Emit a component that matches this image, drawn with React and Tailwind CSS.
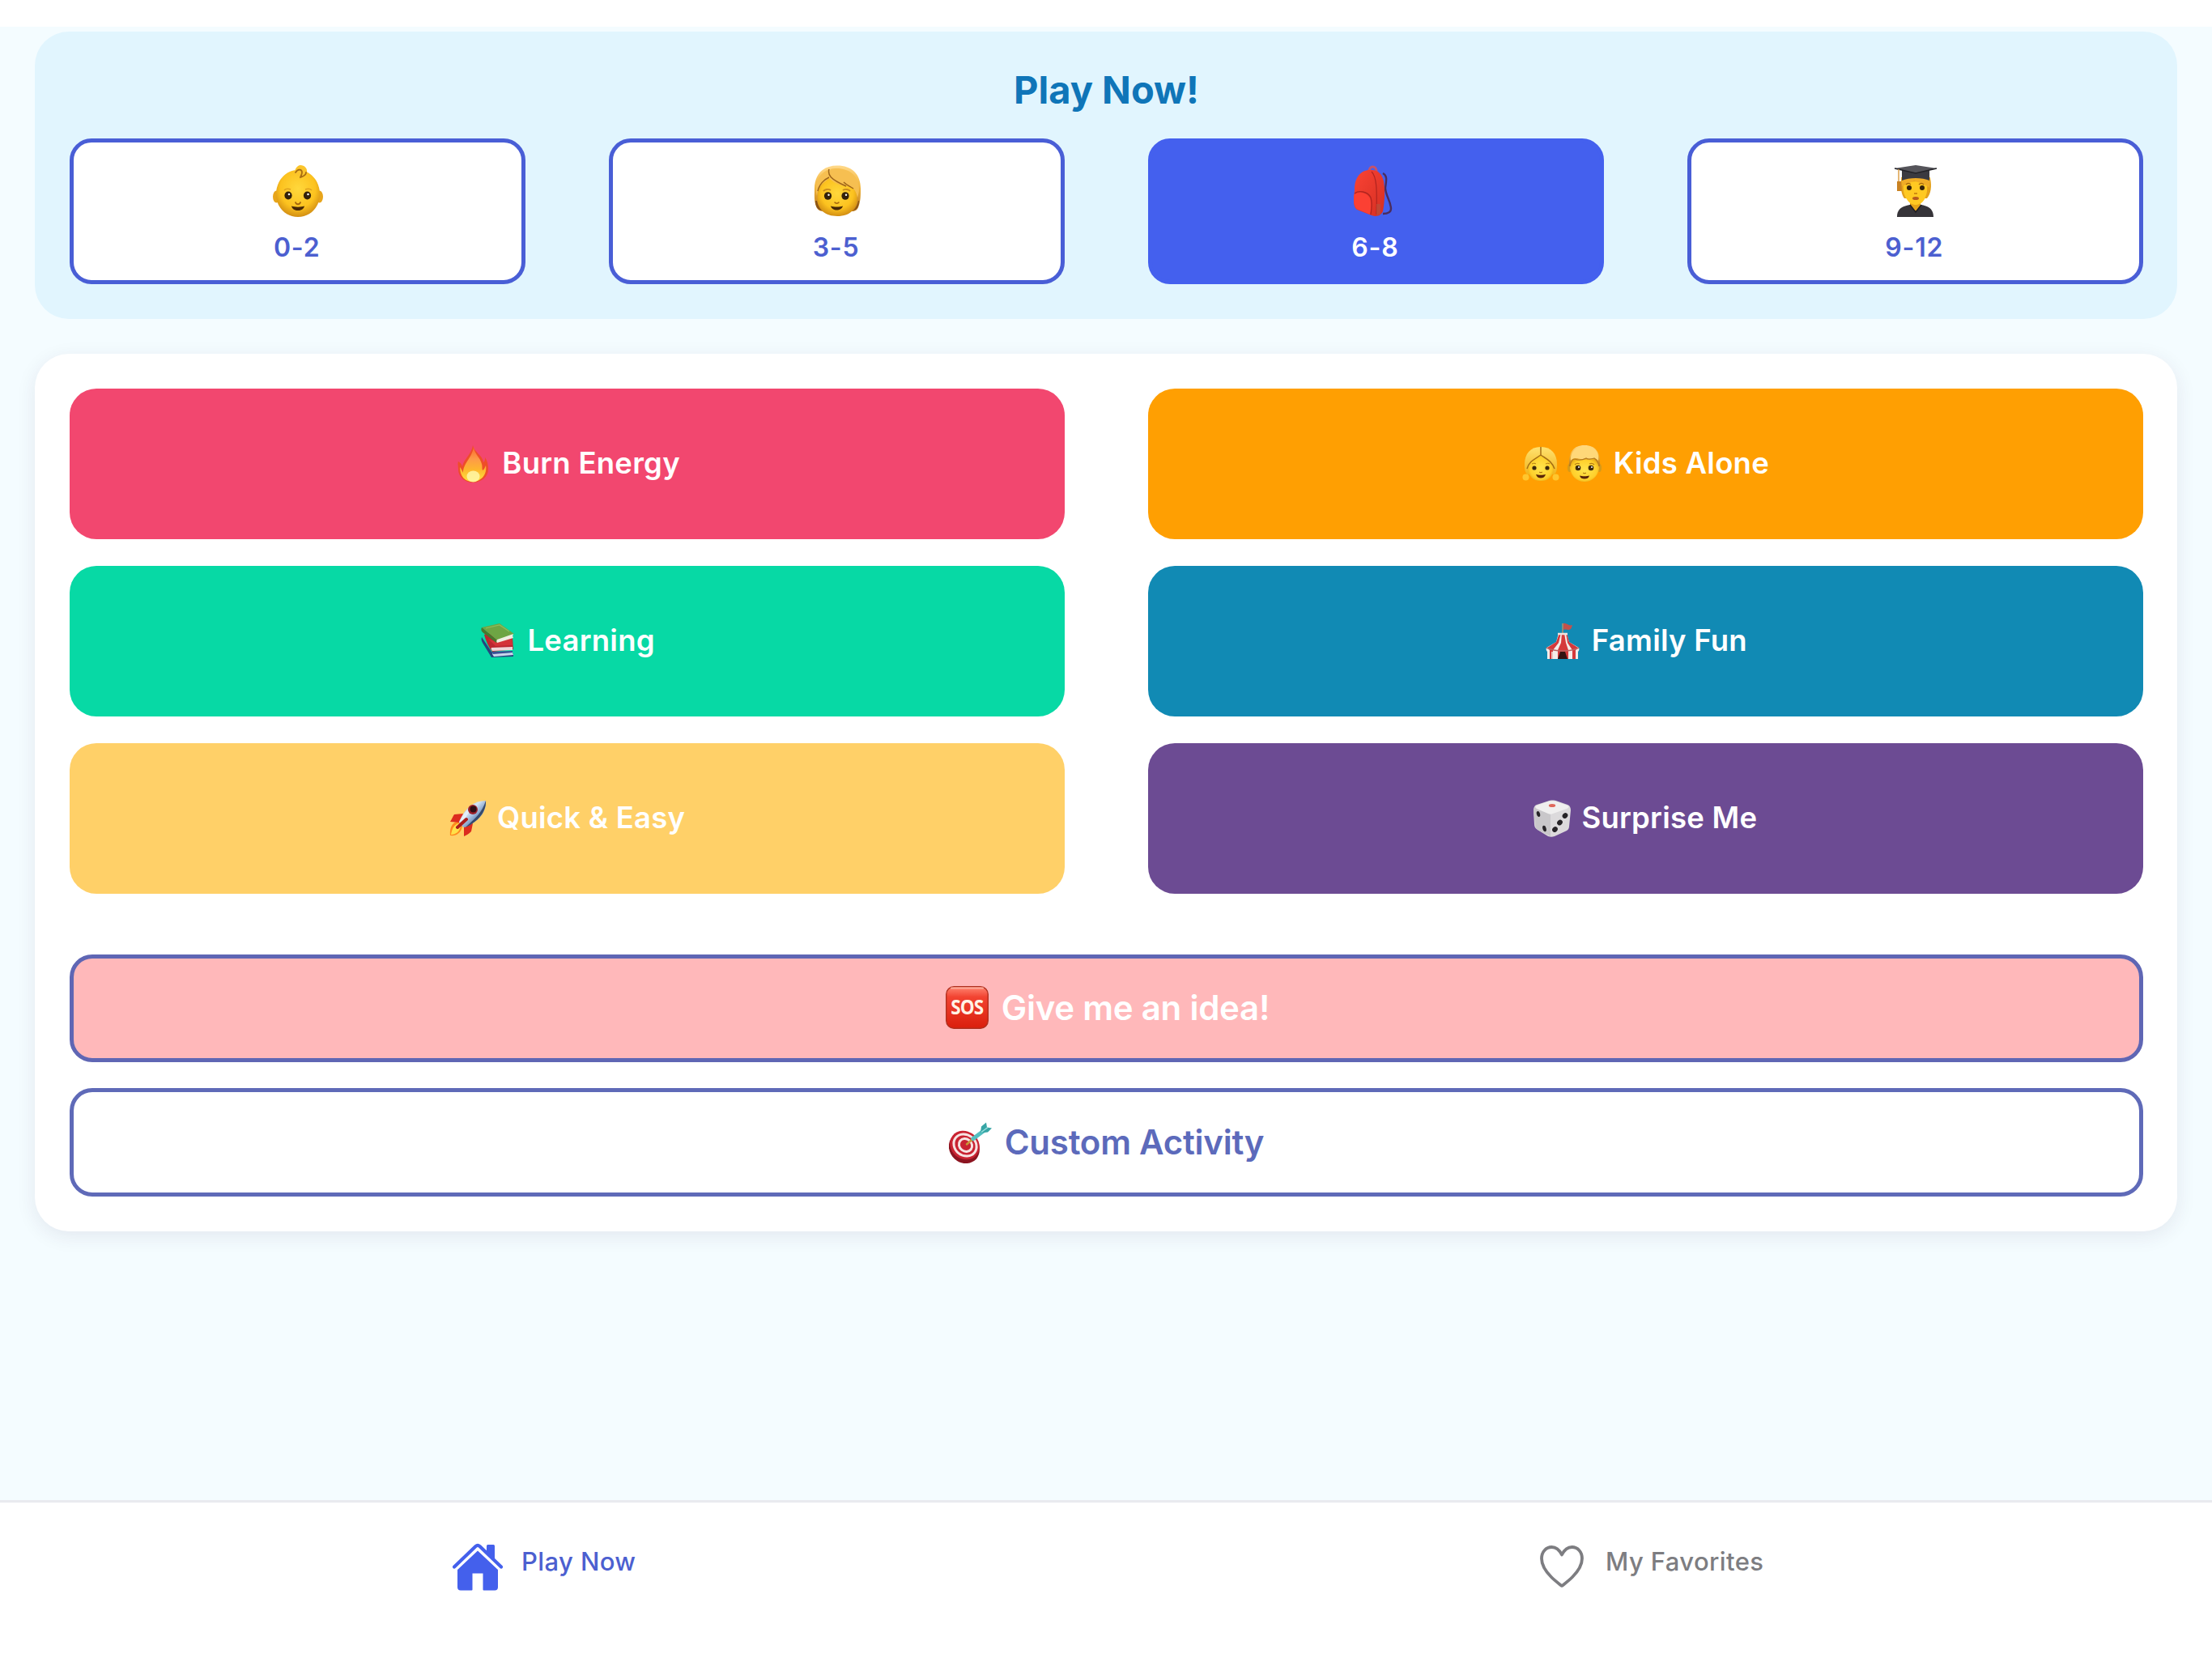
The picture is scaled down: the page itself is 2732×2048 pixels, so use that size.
import React from "react";

function Defs() {
  return (
    <svg width="0" height="0" className="absolute" aria-hidden="true">
      <defs>
        <radialGradient id="skin" cx="0.5" cy="0.4" r="0.62">
          <stop offset="0" stopColor="#ffd83c" />
          <stop offset="0.65" stopColor="#fcc21f" />
          <stop offset="1" stopColor="#cf8a12" />
        </radialGradient>
        <radialGradient id="skinLight" cx="0.5" cy="0.5" r="0.6">
          <stop offset="0" stopColor="#ffe44d" />
          <stop offset="0.7" stopColor="#ffd02b" />
          <stop offset="1" stopColor="#e0a012" />
        </radialGradient>
        <linearGradient id="hair" x1="0" y1="0" x2="0" y2="1">
          <stop offset="0" stopColor="#ffd98a" />
          <stop offset="0.45" stopColor="#f3b73e" />
          <stop offset="1" stopColor="#b9771a" />
        </linearGradient>
        <linearGradient id="hairLight" x1="0" y1="0" x2="0" y2="1">
          <stop offset="0" stopColor="#ffe271" />
          <stop offset="1" stopColor="#f2b51c" />
        </linearGradient>
        <linearGradient id="red" x1="0" y1="0" x2="1" y2="1">
          <stop offset="0" stopColor="#fb4335" />
          <stop offset="1" stopColor="#d42f22" />
        </linearGradient>
        <linearGradient id="flame" x1="0" y1="0" x2="0" y2="1">
          <stop offset="0" stopColor="#fb6a2e" />
          <stop offset="0.35" stopColor="#fd9a48" />
          <stop offset="0.65" stopColor="#fdb62e" />
          <stop offset="1" stopColor="#ffe23e" />
        </linearGradient>
        <linearGradient id="sos" x1="0" y1="0" x2="0" y2="1">
          <stop offset="0" stopColor="#ff8672" />
          <stop offset="0.25" stopColor="#f24331" />
          <stop offset="1" stopColor="#da1e0c" />
        </linearGradient>
        <linearGradient id="rocket" x1="0" y1="0" x2="1" y2="1">
          <stop offset="0" stopColor="#7f9cc4" />
          <stop offset="0.4" stopColor="#d5e4f5" />
          <stop offset="0.7" stopColor="#5d82b5" />
          <stop offset="1" stopColor="#2f4468" />
        </linearGradient>
      </defs>
    </svg>
  );
}

function Baby() {
  return (
    <svg viewBox="0 0 64 64" className="size-16">
      <ellipse cx="5.500" cy="39" rx="4.500" ry="7.500" fill="#e8a51b" />
      <ellipse cx="58.500" cy="39" rx="4.500" ry="7.500" fill="#e8a51b" />
      <path d="M32 6C47 6 59 19 59 36c0 16-12 28-27 28S5 52 5 36C5 19 17 6 32 6z" fill="url(#skin)" />
      <path d="M27 11c1-6 4-11 8-11 5 0 9 4 8 9-1 3-4 5-7 6" fill="#fbc52c" />
      <path d="M29 9c3-5 8-4 8 0 0 3-2 5-2 6 3-1 7-2 7-6" fill="none" stroke="#a86d12" strokeWidth="1.800" strokeLinecap="round" />
      <path d="M15 31c2-2 5-2 8-1M41 30c3-1 6-1 8 1" fill="none" stroke="#dfa01e" strokeWidth="1.500" />
      <ellipse cx="20" cy="37.500" rx="4.600" ry="5" fill="#33210a" />
      <ellipse cx="43.500" cy="37.500" rx="4.600" ry="5" fill="#33210a" />
      <circle cx="21" cy="36" r="1.300" fill="#fff" />
      <circle cx="44.500" cy="36" r="1.300" fill="#fff" />
      <path d="M29 46c1 3 5 3 6 0" fill="none" stroke="#a5660c" strokeWidth="1.800" strokeLinecap="round" />
      <path d="M24 50.500c4 1.500 12 1.500 16 0-1 4-4 5.500-8 5.500s-7-1.500-8-5.500z" fill="#472806" />
    </svg>
  );
}

function Child() {
  return (
    <svg viewBox="0 0 64 64" className="size-16">
      <path d="M32 .5C14 .5 4 12 4 29c0 8-1 17 3 24 2 3 5 4 8 4h35c4 0 7-2 8-5 3-7 3-15 3-23C61 11 50 .5 32 .5z" fill="url(#hair)" />
      <path d="M22 16c-6 6-13 9-14 18-1 10-1 16 4 21 5 6 12 8 20 8s15-2 20-8c5-5 5-11 4-20-1-4-2-6-5-8-11-1-20-2-29-11z" fill="url(#skin)" />
      <path d="M22 15C12 20 8 28 7 38 3 24 8 11 22 5c-1 4-1 7 0 10zM22 15c6 5 16 8 21 11l-3-5c4 4 9 5 12 8 3 3 4 7 5 11 4-12 2-24-8-31C42 4 30 3 24 5c-2 3-3 7-2 10z" fill="#f6bf51" />
      <path d="M22 5c-2 7 1 12 21 21M22 15C16 18 10 23 8 32M40 21c4 4 8 5 12 8" fill="none" stroke="#9d6419" strokeWidth="1.500" />
      <path d="M5 44c0 6 2 11 8 12-3-3-5-7-6-12zM59 44c0 6-2 11-7 12 3-3 5-7 6-12z" fill="#8a5416" />
      <path d="M15 32c2-2 6-3 9-1M39 31c3-2 7-1 9 1" fill="none" stroke="#c88a1d" strokeWidth="1.800" />
      <ellipse cx="20.500" cy="38" rx="4.600" ry="4.800" fill="#33210a" />
      <ellipse cx="42" cy="38" rx="4.600" ry="4.800" fill="#33210a" />
      <circle cx="21.500" cy="36.700" r="1.200" fill="#fff" />
      <circle cx="43" cy="36.700" r="1.200" fill="#fff" />
      <path d="M29 46c1 1.500 4 1.500 5 0" fill="none" stroke="#a5660c" strokeWidth="1.500" strokeLinecap="round" />
      <path d="M24 50.500c4 1.300 11 1.300 15 0-1 3.500-4 5-7.500 5s-6.500-1.500-7.500-5z" fill="#472806" />
    </svg>
  );
}

function Backpack() {
  return (
    <svg viewBox="0 0 64 64" className="size-16">
      <path d="M41 10c6 3 4 10 3 18 0 9 7 17 7 26 0 5-5 6-10 6" fill="none" stroke="#4a2c5e" strokeWidth="2.400" />
      <path d="M24 8c0-8 9-8 9 0" fill="none" stroke="#c4526c" strokeWidth="3" />
      <path d="M6 30C6 16 13 6 25 6c10-1 15 5 17 14 2 13 1 26-1 37-3 6-8 7-14 5L9 55c-4-3-4-8-4-13z" fill="url(#red)" />
      <path d="M27 8c6 6 7 20 6 53" fill="none" stroke="#b02420" strokeWidth="1.200" />
      <path d="M33 48h5v13l-5 1z" fill="#b8503a" opacity="0.700" />
      <path d="M5 37c4-5 16-4 20 4 2 6 1 14 0 20L9 54c-4-3-4-11-4-17z" fill="#fb4033" />
      <path d="M6 35c5-4 16-3 20 5 2 6 1 15 0 21" fill="none" stroke="#b02420" strokeWidth="1.300" />
    </svg>
  );
}

function Student() {
  return (
    <svg viewBox="0 0 64 64" className="size-16">
      <path d="M15 17C14 27 15 36 19 41h28c5-6 6-15 4-25z" fill="#e3a01b" />
      <path d="M26 42h13v9l-6 8-7-8z" fill="#e5a317" />
      <path d="M18 23c2-3 27-4 29 0 1 9-1 15-3 19-3 5-7 7-11 7s-8-2-11-7c-3-4-5-10-4-19z" fill="#ffc922" />
      <path d="M16 26c6-2 12-5 15-7 6 3 13 4 19 9l1-13H15z" fill="#f0ac27" />
      <path d="M10 64c0-10 6-13 16-15l7 8 7-8c9 2 15 5 15 15z" fill="#363439" />
      <path d="M26 49l7 9 7-9" fill="none" stroke="#1f1d22" strokeWidth="1.500" />
      <path d="M16 5h34v14c-9-4-25-4-34 0z" fill="#3b3a40" />
      <path d="M7 4L33 0l26 4-26 6z" fill="#55545a" />
      <path d="M7 4l26 6 26-6" fill="none" stroke="#232227" strokeWidth="1.300" />
      <path d="M12 5v16" stroke="#dca14a" strokeWidth="1.500" />
      <path d="M10 20h5l1 12h-6z" fill="#c98222" />
      <path d="M21 24c2-2 4-2 6 0M37 24c2-2 4-2 6 0" fill="none" stroke="#a8690d" strokeWidth="1.300" />
      <circle cx="25" cy="28" r="3" fill="#33210a" />
      <circle cx="41" cy="28" r="3" fill="#33210a" />
      <path d="M31 35h4" stroke="#c0790c" strokeWidth="1.500" />
      <ellipse cx="33" cy="41" rx="4" ry="2" fill="#b65a1d" />
    </svg>
  );
}

function Flame() {
  return (
    <svg viewBox="0 0 46 46" className="size-[46px]">
      <path d="M23 0c1 8 12 12 13 21 2-1 2-4 2-6 3 4 4 9 4 15 0 9-9 16-19 16S5 39 5 30c0-5-1-7 0-10 2 1 4 3 5 6 2-9 12-16 13-26z" fill="#ee4e28" />
      <path d="M24 2c1 9 8 13 10 21 1 3 0 6 1 8 2-1 3-4 4-6 2 11-6 20-16 20S7 38 7 27c2 2 3 5 4 7C11 22 22 16 24 2z" fill="url(#flame)" />
      <ellipse cx="23.500" cy="38.500" rx="8" ry="7" fill="#fff7a8" opacity="0.850" />
    </svg>
  );
}

function Girl() {
  return (
    <svg viewBox="0 0 46 46" className="size-[46px]">
      <circle cx="4.500" cy="39.500" r="4" fill="#ffc62e" />
      <circle cx="41.500" cy="39.500" r="4" fill="#ffc62e" />
      <path d="M23 2C10 2 3 11 3 23c0 6 0 9 3 13h34c3-4 3-7 3-13C43 11 36 2 23 2z" fill="url(#hairLight)" />
      <path d="M23 12C17 17 9 19 7 26c0 12 6 18 16 18s16-6 16-18c-2-7-10-9-16-14z" fill="url(#skinLight)" />
      <path d="M23 2v10C16 17 9 19 6 29M23 12c7 5 13 7 17 17" fill="none" stroke="#a66f15" strokeWidth="1.500" />
      <path d="M12 23c2-1 4-1 5 0M29 23c2-1 4-1 5 0" fill="none" stroke="#b57b12" />
      <circle cx="15" cy="28" r="2.600" fill="#3c280c" />
      <circle cx="31" cy="28" r="2.600" fill="#3c280c" />
      <path d="M21 33c1 1 3 1 4 0" fill="none" stroke="#a5660c" />
      <path d="M17 36c3 1 9 1 12 0-1 3-3 4.500-6 4.500S18 39 17 36z" fill="#5b2408" />
    </svg>
  );
}

function Boy() {
  return (
    <svg viewBox="0 0 46 46" className="size-[46px]">
      <ellipse cx="4.500" cy="28" rx="2.500" ry="5" fill="#d69a18" />
      <ellipse cx="41.500" cy="28" rx="2.500" ry="5" fill="#d69a18" />
      <path d="M23 0C9 0 3 9 4 26h38C43 9 37 0 23 0z" fill="url(#hair)" />
      <path d="M9 16c8 2 20 2 28 0 3 4 4 8 4 13-2 10-9 16-18 16S7 39 5 29c0-5 1-9 4-13z" fill="url(#skinLight)" />
      <path d="M6 19C5 7 14 1 24 1s18 6 16 18c-3-3-4-3-6-3-3 0-6 2-9 0-4 2-8 1-11 0-3 0-6 0-8 3z" fill="#ffd879" />
      <path d="M5 26c1-6 3-9 6-9 5 2 10 1 14-1 3 2 7 1 10 0 3 2 5 5 6 10" fill="none" stroke="#b57a20" strokeWidth="1.200" />
      <path d="M11 24c2-2 4-2 6-1M29 23c2-1 4-1 6 1" fill="none" stroke="#b57b12" strokeWidth="1.200" />
      <circle cx="15" cy="28" r="3.300" fill="#3c280c" />
      <circle cx="31" cy="28" r="3.300" fill="#3c280c" />
      <circle cx="16" cy="27" r="1" fill="#fff" />
      <circle cx="32" cy="27" r="1" fill="#fff" />
      <path d="M21 34c1 1 3 1 4 0" fill="none" stroke="#a5660c" />
      <path d="M17 37.500c3 1 9 1 12 0-1 3-3 4-6 4s-5-1-6-4z" fill="#5b2408" />
    </svg>
  );
}

function Books() {
  return (
    <svg viewBox="0 0 46 46" className="size-[46px]">
      <path d="M3 18c-1 3 0 5 1 7l11 18 27-1v-4l-25 1z" fill="#26457f" />
      <path d="M16 38l25-1 1 3-24 2c-1-1-2-3-2-4z" fill="#c9d6ea" />
      <path d="M15 36l26-1v2l-24 2z" fill="#3b4f94" />
      <path d="M6 15l4-2 31 6 1 14-26 3C11 30 8 22 6 15z" fill="#bb2630" />
      <path d="M11 20l9 9 21-1-1-8-19 4z" fill="#d43338" />
      <path d="M15 31l26-1v4l-25 1c-1-1-2-3-1-4z" fill="#efd5d6" />
      <path d="M3 6L25 1l18 13-21 8z" fill="#6ea544" />
      <path d="M3 6c-1 2-1 4 1 6l17 13 1-3z" fill="#47782d" />
      <path d="M22 21l20-7c-1 2-1 3 0 5l-20 6c-1-1-1-3 0-4z" fill="#f0efe2" />
      <path d="M8 7l17-4 12 8" fill="none" stroke="#8dbd5e" strokeWidth="1.200" />
    </svg>
  );
}

function Tent() {
  return (
    <svg viewBox="0 0 46 46" className="size-[46px]">
      <path d="M23 1v15" stroke="#9a8f77" strokeWidth="1.800" />
      <path d="M24 1c4-1 6 4 11 2-1 3-1 5-4 6-3 0-4-1-7 0z" fill="#c4514b" />
      <path d="M18 13h10l3 11 12 7c1 2 0 4-1 5v9H4v-9c-1-1-2-3-1-5l12-7z" fill="#f4ece9" />
      <path d="M19 13h2l-3 12-7 9v11H7V34l-3-3 11-7zM22 13h3l2 12 3 9v11H17V34l4-9zM27 13h1l3 11 11 7-3 3v11h-4V34l-6-9z" fill="#d5393b" />
      <path d="M3 31c6 3 10 4 20 4s15-1 20-4" fill="none" stroke="#bd6462" strokeWidth="1.500" />
      <path d="M17 45l3-9h6l3 9z" fill="#321312" />
      <path d="M17 14h12" stroke="#efe2df" strokeWidth="2.500" />
      <path d="M10 36v9M34 36v9" stroke="#f4ece9" strokeWidth="1.500" />
    </svg>
  );
}

function Rocket() {
  return (
    <svg viewBox="0 0 46 46" className="size-[46px]">
      <path d="M12 26C4 27 0 34 1 44c7 1 14-3 15-12z" fill="#ff8a1e" />
      <path d="M12 29C6 30 3 36 2 43c6 0 11-4 12-11z" fill="#ffe14a" />
      <path d="M17 17L6 18c-2 3-3 6-5 9l13 1zM29 29l-2 10c-3 3-5 4-9 6l0-13z" fill="#dc2c1f" />
      <path d="M45 1C31 1 20 9 12 27c0 2 4 7 7 7C35 27 46 16 45 1z" fill="url(#rocket)" />
      <path d="M13 26c4-8 8-14 14-18 2 2-5 9-11 22z" fill="#e9f2fb" opacity="0.800" />
      <path d="M45 1c1 12-8 25-25 33 8-8 20-16 25-33z" fill="#364a6c" />
      <circle cx="29" cy="12" r="6" fill="#9d2029" />
      <circle cx="29.500" cy="11.500" r="4" fill="#2d0e15" />
      <path d="M10 34l11-10" stroke="#ad1d1a" strokeWidth="4" strokeLinecap="round" />
    </svg>
  );
}

function Dice() {
  return (
    <svg viewBox="0 0 46 46" className="size-[46px]">
      <path d="M18 1.500c3-1.300 8-1.300 11 0L42 6c3 1 4 4 4 7l-2 20c0 3-2 5-5 6l-13 6c-3 1-5 1-8 0L5 37c-3-2-4-4-4-7L0 14c0-4 1-7 4-8z" fill="#dcdadc" />
      <path d="M2 9c5 3 12 6 19 8v28L7 38c-4-2-5-5-5-9L0 14c0-2 1-4 2-5z" fill="#c9c7ca" />
      <path d="M4 7l14-5c3-1 7-1 10 0l14 5c2 1 2 3-1 4l-17 6c-2 1-4 1-6 0L4 11c-2-1-2-3 0-4z" fill="#f0efef" />
      <ellipse cx="23" cy="7" rx="4.200" ry="2" fill="#df685c" />
      <ellipse cx="6" cy="17.500" rx="2.100" ry="3.600" fill="#262327" transform="rotate(-15 6 17.500)" />
      <ellipse cx="13.500" cy="35.500" rx="2.200" ry="3.800" fill="#262327" transform="rotate(-15 13.500 35.500)" />
      <ellipse cx="39" cy="19.500" rx="3.600" ry="3.100" fill="#262327" transform="rotate(-50 39 19.500)" />
      <ellipse cx="32.500" cy="28" rx="3.600" ry="3.100" fill="#262327" transform="rotate(-50 32.500 28)" />
      <ellipse cx="26.500" cy="36.500" rx="3.600" ry="3.100" fill="#262327" transform="rotate(-50 26.500 36.500)" />
    </svg>
  );
}

function Sos() {
  return (
    <span className="relative block size-[53px]">
      <svg viewBox="0 0 53 53" className="size-[53px]">
        <rect x="0.700" y="0.700" width="51.600" height="51.600" rx="9.500" fill="url(#sos)" stroke="#b0301f" strokeWidth="1.400" />
        <path d="M7 2.500h39" stroke="#ffab9a" strokeWidth="2" strokeLinecap="round" />
      </svg>
      <span className="absolute inset-0 flex items-center justify-center font-['Open_Sans'] text-[25px] font-bold tracking-[-1px] text-[#fff3e6]">
        <span className="inline-block -translate-y-px scale-x-90">SOS</span>
      </span>
    </span>
  );
}

function Target() {
  return (
    <svg viewBox="0 0 53 53" className="size-[53px]">
      <g transform="translate(0 1.500)">
        <path d="M1 24c5-11 20-13 30-5 8 7 9 19 3 27-8 8-20 7-27 0C1 40-2 32 1 24z" fill="#8c1420" />
        <ellipse cx="19.500" cy="29" rx="19" ry="17" fill="#c92331" transform="rotate(38 19.500 29)" />
        <ellipse cx="20" cy="29" rx="14.800" ry="12.800" fill="none" stroke="#f7e3e2" strokeWidth="3" transform="rotate(38 20 29)" />
        <ellipse cx="20.500" cy="29" rx="8.500" ry="7.500" fill="none" stroke="#f7e3e2" strokeWidth="3" transform="rotate(38 20.500 29)" />
        <circle cx="21" cy="29" r="3.500" fill="#c92331" />
        <path d="M22 28l9-8" stroke="#c99838" strokeWidth="2.500" strokeLinecap="round" />
        <path d="M30 21l12-9" stroke="#53bfc1" strokeWidth="5" strokeLinecap="round" />
        <path d="M39 13l1-7 6-5 1 6 6 1-5 5-9 1z" fill="#37a5a5" />
        <path d="M40 13l8-6" stroke="#9ae2df" strokeWidth="1.500" />
      </g>
    </svg>
  );
}

function House() {
  return (
    <svg viewBox="0 0 62 60" className="h-[60px] w-[62px]" fill="#4460ec">
      <path d="M42 4.500q0-1.500 1.500-1.500h7q1.500 0 1.500 1.500V21L42 12z" />
      <path d="M2 30.500L28.500 5q2.500-2.300 5 0L60 30.500" fill="none" stroke="#4460ec" strokeWidth="4.200" strokeLinecap="round" strokeLinejoin="round" />
      <path d="M31 10.500L56 34v21.500q0 4-4 4H38.500q-1 0-1-1V38.500h-13v20q0 1-1 1H10q-4 0-4-4V34z" />
    </svg>
  );
}

function Heart() {
  return (
    <svg viewBox="0 0 54 52" className="h-[52px] w-[54px]">
      <path
        d="M27 11.500C24 5.500 19.500 2 14.500 2 7.500 2 2 7.800 2 16c0 8.500 5.500 16.500 12 23 4 4 8.500 7.500 12 10.300q1 .8 2 0c3.500-2.800 8-6.300 12-10.300 6.500-6.500 12-14.500 12-23 0-8.200-5.500-14-12.500-14C34.500 2 30 5.500 27 11.500z"
        fill="none"
        stroke="#7d7d81"
        strokeWidth="3.800"
        strokeLinejoin="round"
      />
    </svg>
  );
}

const ages = [
  { label: "0-2", Icon: Baby },
  { label: "3-5", Icon: Child },
  { label: "6-8", Icon: Backpack, active: true },
  { label: "9-12", Icon: Student },
];

const activities = [
  { label: "Burn Energy", icons: [Flame], color: "bg-[#f2476f]" },
  { label: "Kids Alone", icons: [Girl, Boy], color: "bg-[#ff9f02]" },
  { label: "Learning", icons: [Books], color: "bg-[#07d9a5]" },
  { label: "Family Fun", icons: [Tent], color: "bg-[#118ab4]" },
  { label: "Quick & Easy", icons: [Rocket], color: "bg-[#ffd068]" },
  { label: "Surprise Me", icons: [Dice], color: "bg-[#6c4b93]" },
];

function AgeCard({ label, Icon, active }) {
  return (
    <button
      className={
        "flex h-[180px] w-[22%] flex-col items-center rounded-[27px] border-[5px] pt-[28px] " +
        (active
          ? "border-[#4460ee] bg-[#4460ee] text-white"
          : "border-[#495ed6] bg-white text-[#4c5fd0]")
      }
    >
      <Icon />
      <span className="mt-[18px] -ml-0.5 text-[32px] leading-10 font-[570] tracking-[0.8px]">{label}</span>
    </button>
  );
}

function ActivityButton({ label, icons, color }) {
  return (
    <button className={"flex h-[186px] w-[48%] items-center justify-center gap-[13px] rounded-[33px] text-white " + color}>
      <span className="flex gap-2">
        {icons.map((Icon, i) => (
          <Icon key={i} />
        ))}
      </span>
      <span className="text-[36.5px] leading-none font-[570] tracking-[0.25px]">{label}</span>
    </button>
  );
}

export default function App() {
  return (
    <div className="flex h-[2048px] w-[2732px] flex-col overflow-hidden bg-white pt-[33px] font-['Inter',sans-serif]">
      <Defs />
      <main className="flex-1 bg-[#f4fcff] px-[43px] pt-[6px]">
        <section className="h-[355px] rounded-[42px] bg-[#e1f5fe] pt-[44px] pr-[42px] pl-[43px]">
          <h1 className="text-center text-[47px] leading-14 font-[670] text-[#0f75b8]">Play Now!</h1>
          <div className="mt-8 flex justify-between">
            {ages.map((a) => (
              <AgeCard key={a.label} {...a} />
            ))}
          </div>
        </section>

        <section className="mt-[43px] h-[1084px] rounded-[42px] bg-white pt-[42.5px] pr-[42px] pl-[43px] shadow-[0_6px_24px_rgba(50,30,80,0.09)]">
          <div className="flex flex-wrap justify-between gap-y-[33px]">
            {activities.map((a) => (
              <ActivityButton key={a.label} {...a} />
            ))}
          </div>
          <button className="mt-[75px] flex h-[133px] w-full items-center justify-center gap-4 rounded-[28px] border-[5px] border-[#5f66b4] bg-[#ffb8ba] pb-px pl-[3px] text-white">
            <Sos />
            <span className="text-[42px] leading-none font-[560] tracking-[-0.25px]">Give me an idea!</span>
          </button>
          <button className="mt-8 flex h-[134px] w-full items-center justify-center gap-4 rounded-[28px] border-[5px] border-[#5f6ab8] bg-white text-[#5c6abb]">
            <Target />
            <span className="text-[42px] leading-none font-[560] tracking-[-0.25px]">Custom Activity</span>
          </button>
        </section>
      </main>

      <nav className="flex h-[195px] border-t-[3px] border-[#e9eaef] bg-white">
        <a className="flex w-1/2 pt-[49px] pl-[559px] text-[#4c5fd0]">
          <House />
          <span className="ml-[23px] text-[31px] leading-[48px] font-medium tracking-[0.4px]">Play Now</span>
        </a>
        <a className="flex w-1/2 pt-[49px] pl-[536px] text-[#7d7d81]">
          <span className="pt-1">
            <Heart />
          </span>
          <span className="ml-[27px] text-[31px] leading-[48px] font-medium tracking-[0.4px]">My Favorites</span>
        </a>
      </nav>
    </div>
  );
}
